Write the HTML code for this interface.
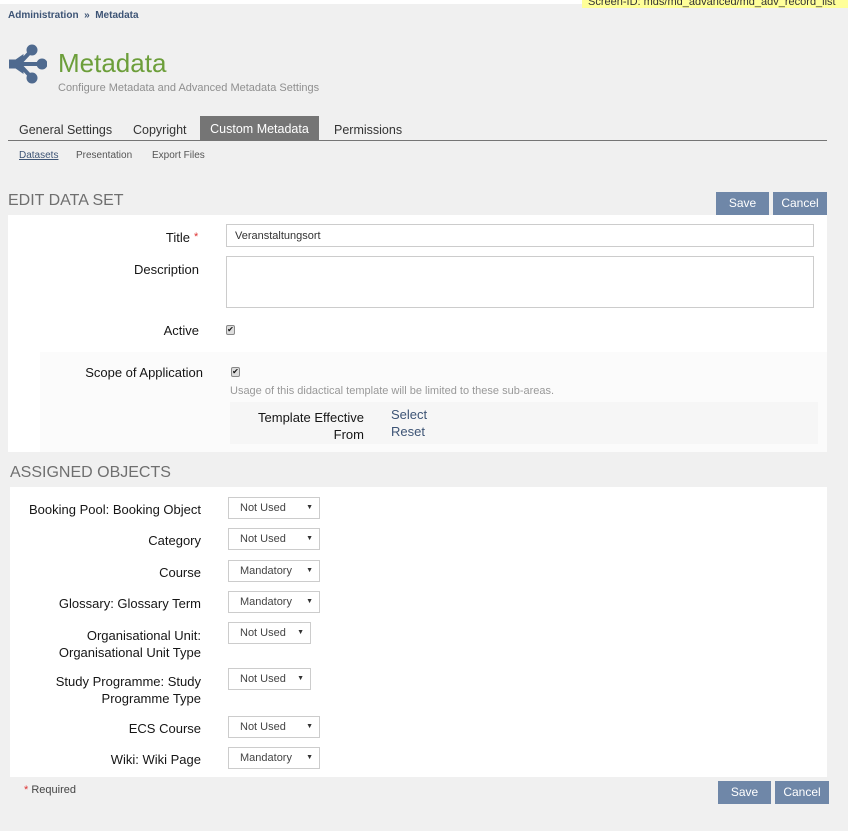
<!DOCTYPE html>
<html><head><style>
*{box-sizing:border-box;margin:0;padding:0}
body{width:848px;height:831px;background:#f0f0f0;font-family:"Liberation Sans",sans-serif;color:#161616;position:relative;overflow:hidden;font-size:12.5px}
.a{position:absolute;white-space:nowrap}
.btn{position:absolute;background:#6f87a8;color:#fff;font-size:12px;text-align:center;line-height:23px;height:23px}
.sel{position:absolute;height:22px;border:1px solid #ccc;background:#fff;font-size:11px;color:#444;padding-left:11px;line-height:20px}
.sel:after{content:"▼";position:absolute;right:6px;top:0;font-size:7px;color:#333}
.lbl{position:absolute;text-align:right;right:647px;font-size:13px;color:#161616;line-height:17px}
.cb{position:absolute;width:9px;height:10px;border:1px solid #888;background:#ddd;border-radius:2px;font-size:8px;line-height:8px;text-align:center;color:#111}
</style></head><body>
<div class="a" style="left:0;top:0;width:848px;height:4px;background:#fff"></div>
<div class="a" style="left:582px;top:0;width:266px;height:8px;background:#ffff99;overflow:hidden;font-size:11px;line-height:4px;color:#333;padding-left:6px">Screen-ID: mds/md_advanced/md_adv_record_list</div>
<div class="a" style="left:8px;top:10px;font-size:10px;color:#3d5475;font-weight:bold">Administration &nbsp;» &nbsp;Metadata</div>
<svg class="a" style="left:9px;top:44px" width="38" height="40" viewBox="0 0 38 40"><g fill="#4f6a8f" stroke="#4f6a8f"><circle cx="23" cy="6" r="5"/><circle cx="33" cy="20" r="5"/><circle cx="23" cy="34" r="5"/><path d="M0 16h12v8H0z"/><path d="M10 20L23 6M10 20H33M10 20L23 34" stroke-width="4" fill="none"/><path d="M1 20L14 11V29z"/></g></svg>
<div class="a" style="left:58px;top:48px;font-size:26px;color:#6c9e3a">Metadata</div>
<div class="a" style="left:58px;top:82px;font-size:11px;color:#8f8f8f">Configure Metadata and Advanced Metadata Settings</div>
<div class="a" style="left:8px;top:140px;width:819px;height:1px;background:#757575"></div>
<div class="a" style="left:19px;top:123px;font-size:12.5px;color:#333">General Settings</div>
<div class="a" style="left:133px;top:123px;font-size:12.5px;color:#333">Copyright</div>
<div class="a" style="left:200px;top:116px;width:119px;height:24px;background:#757575;color:#fff;font-size:12.5px;text-align:center;line-height:26px">Custom Metadata</div>
<div class="a" style="left:334px;top:123px;font-size:12.5px;color:#333">Permissions</div>
<div class="a" style="left:19px;top:150px;font-size:10px;color:#3d5475;text-decoration:underline">Datasets</div>
<div class="a" style="left:76px;top:150px;font-size:10px;color:#555">Presentation</div>
<div class="a" style="left:152px;top:150px;font-size:10px;color:#555">Export Files</div>

<div class="a" style="left:8px;top:192px;font-size:16px;color:#6f6f6f">EDIT DATA SET</div>
<div class="btn" style="left:716px;top:192px;width:53px">Save</div>
<div class="btn" style="left:773px;top:192px;width:54px">Cancel</div>
<div class="a" style="left:8px;top:215px;width:819px;height:237px;background:#fff"></div>
<div class="a" style="left:40px;top:352px;width:787px;height:100px;background:#fbfbfb"></div>
<div class="lbl" style="top:229px;right:658px">Title</div><div class="a" style="left:194px;top:231px;color:#d33;font-size:11px">*</div>
<div class="a" style="left:226px;top:224px;width:588px;height:23px;border:1px solid #ccc;font-size:11px;line-height:22px;padding-left:8px;color:#333">Veranstaltungsort</div>
<div class="lbl" style="top:261px;right:649px">Description</div>
<div class="a" style="left:226px;top:256px;width:588px;height:52px;border:1px solid #ccc"></div>
<div class="lbl" style="top:322px;right:649px">Active</div>
<div class="cb" style="left:226px;top:325px">✔</div>
<div class="lbl" style="top:364px;right:645px">Scope of Application</div>
<div class="cb" style="left:231px;top:367px">✔</div>
<div class="a" style="left:230px;top:385px;font-size:11px;color:#999">Usage of this didactical template will be limited to these sub-areas.</div>
<div class="a" style="left:230px;top:402px;width:588px;height:42px;background:#f6f6f6"></div>
<div class="lbl" style="top:409px;right:484px">Template Effective<br>From</div>
<div class="a" style="left:391px;top:406px;color:#3d5475;line-height:17px;font-size:13px">Select<br>Reset</div>

<div class="a" style="left:10px;top:464px;font-size:16px;color:#6f6f6f">ASSIGNED OBJECTS</div>
<div class="a" style="left:10px;top:487px;width:817px;height:290px;background:#fff"></div>
<div class="lbl" style="top:501px">Booking Pool: Booking Object</div><div class="sel" style="left:228px;top:497px;width:92px">Not Used</div>
<div class="lbl" style="top:532px">Category</div><div class="sel" style="left:228px;top:528px;width:92px">Not Used</div>
<div class="lbl" style="top:564px">Course</div><div class="sel" style="left:228px;top:560px;width:92px">Mandatory</div>
<div class="lbl" style="top:595px">Glossary: Glossary Term</div><div class="sel" style="left:228px;top:591px;width:92px">Mandatory</div>
<div class="lbl" style="top:627px">Organisational Unit:<br>Organisational Unit Type</div><div class="sel" style="left:228px;top:622px;width:83px">Not Used</div>
<div class="lbl" style="top:673px">Study Programme: Study<br>Programme Type</div><div class="sel" style="left:228px;top:668px;width:83px">Not Used</div>
<div class="lbl" style="top:720px">ECS Course</div><div class="sel" style="left:228px;top:716px;width:92px">Not Used</div>
<div class="lbl" style="top:751px">Wiki: Wiki Page</div><div class="sel" style="left:228px;top:747px;width:92px">Mandatory</div>
<div class="a" style="left:24px;top:784px;font-size:11px;color:#444"><span style="color:#d33">*</span> Required</div>
<div class="btn" style="left:718px;top:781px;width:53px">Save</div>
<div class="btn" style="left:775px;top:781px;width:54px">Cancel</div>
</body></html>
